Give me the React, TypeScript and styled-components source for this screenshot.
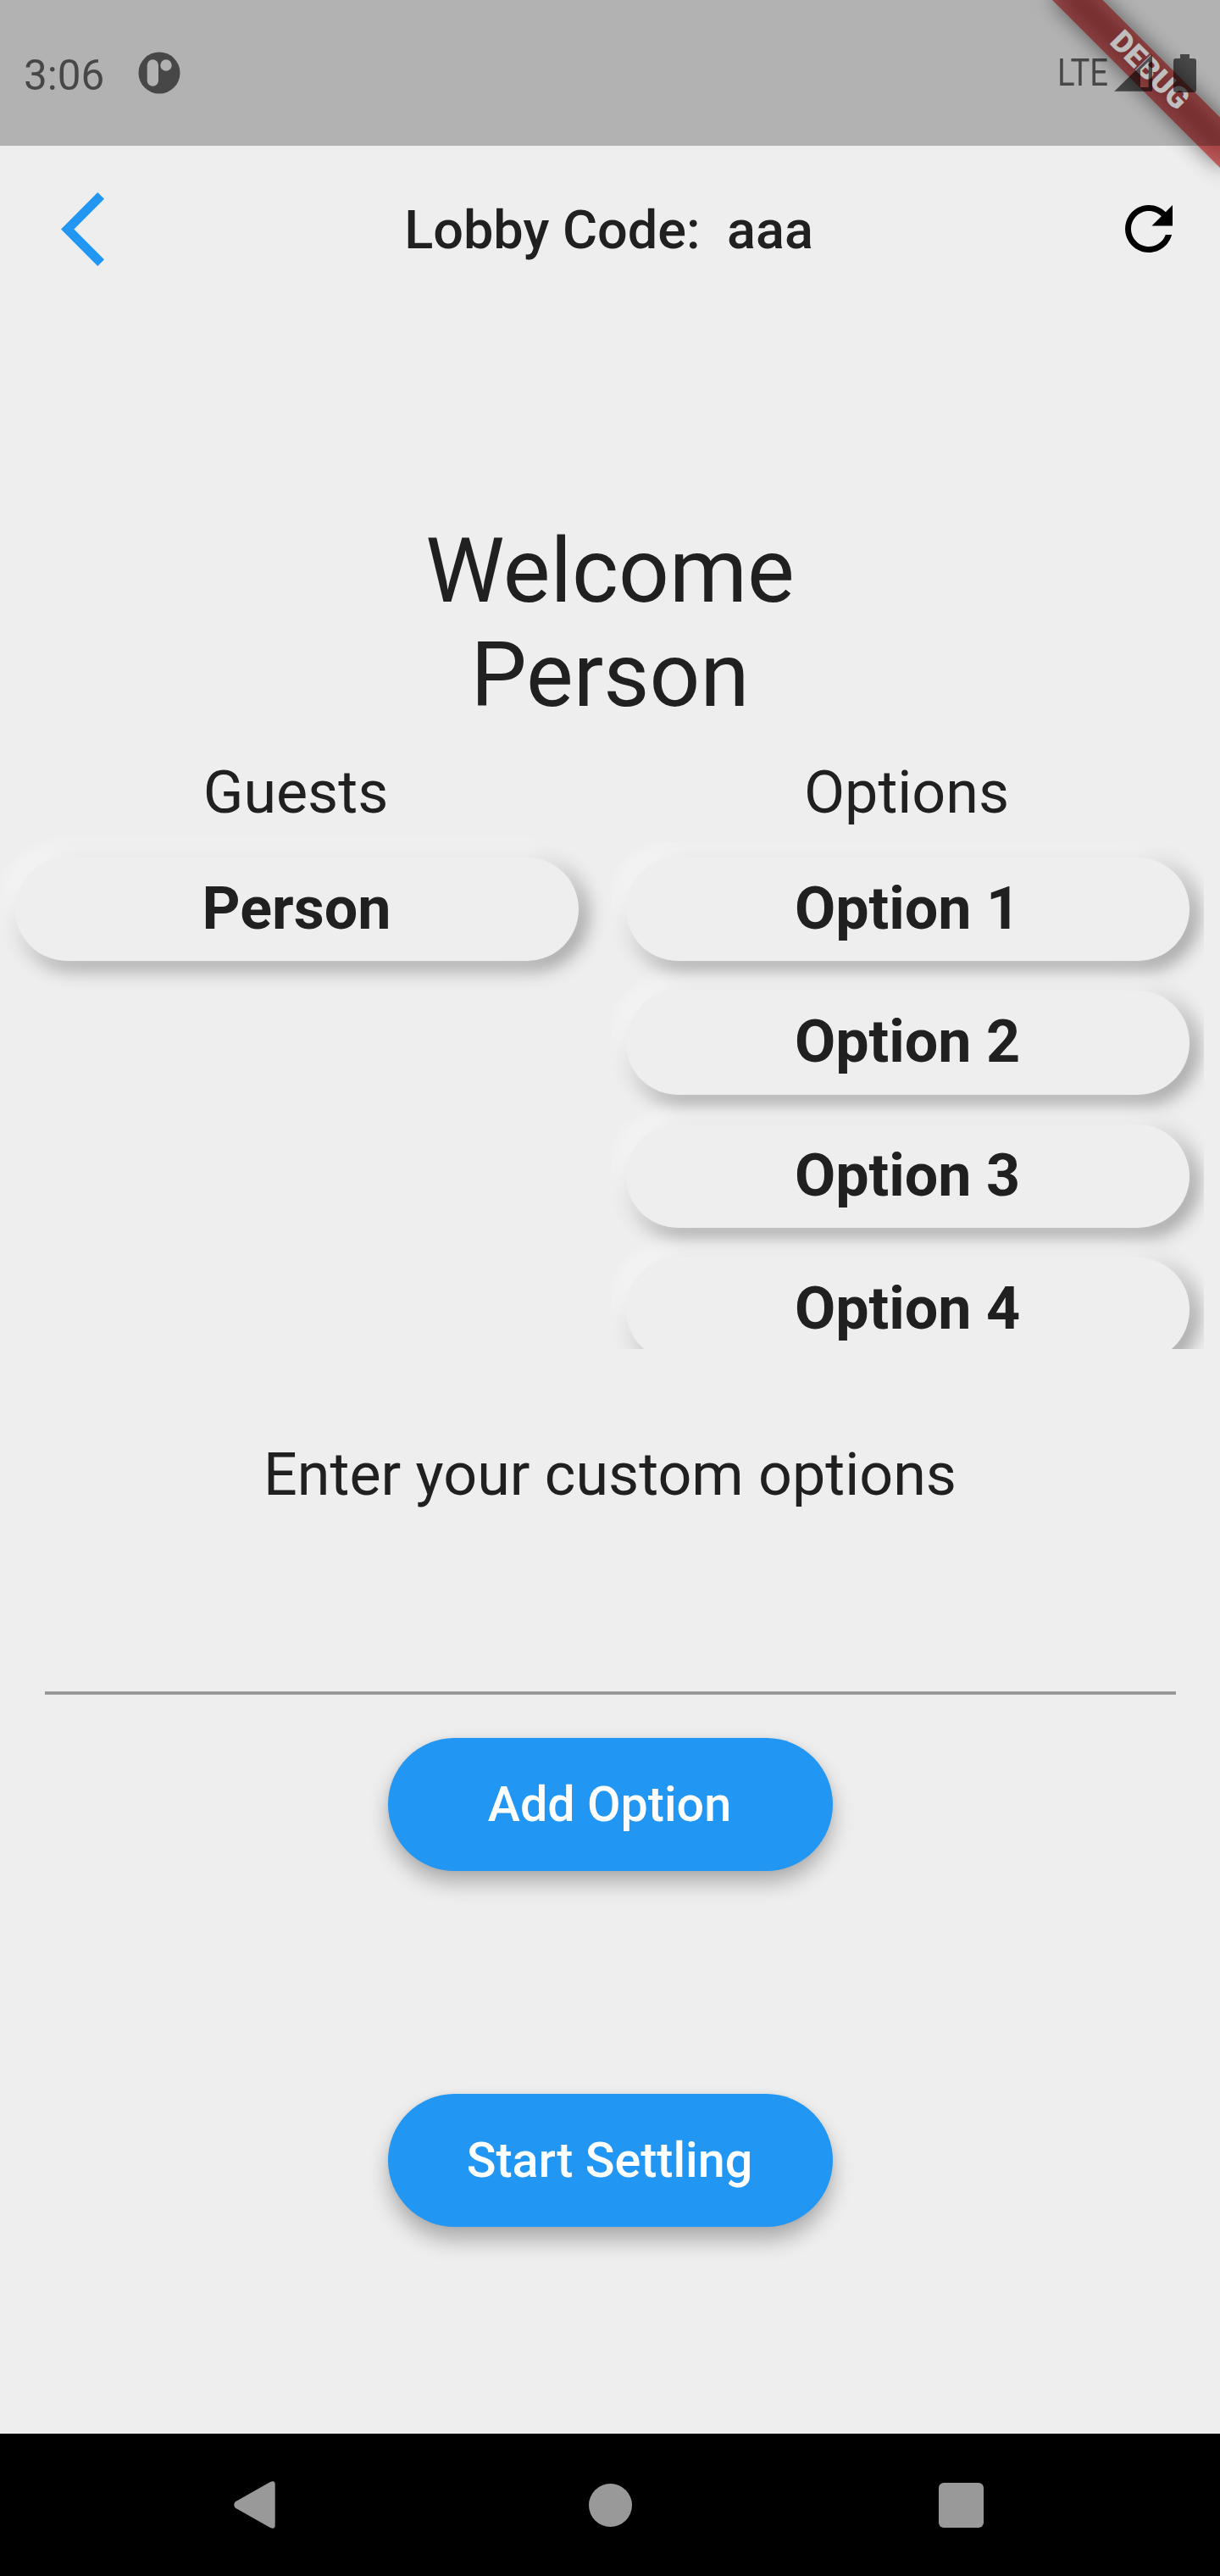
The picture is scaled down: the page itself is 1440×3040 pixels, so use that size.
import React from 'react';
import styled, { createGlobalStyle } from 'styled-components';

const Global = createGlobalStyle`
  html, body { margin: 0; padding: 0; background: #eeeeee; }
  *, *::before, *::after { box-sizing: border-box; }
`;

const Screen = styled.div`
  position: relative;
  display: flex;
  flex-direction: column;
  width: 1440px;
  height: 3040px;
  overflow: hidden;
  background: #eeeeee;
  color: #202020;
  font-family: Roboto, 'Liberation Sans', sans-serif;
`;

const StatusBar = styled.header`
  position: relative;
  z-index: 2;
  display: flex;
  flex: none;
  align-items: center;
  justify-content: space-between;
  height: 172px;
  padding: 0 28px;
  background: rgba(0, 0, 0, 0.25);
`;

const StatusGroup = styled.div`
  display: flex;
  align-items: center;
`;

const Clock = styled.span`
  width: 134.5px;
  padding-top: 5px;
  font-size: 49.4px;
  line-height: 58px;
  color: rgba(0, 0, 0, 0.6);
`;

const Network = styled.span`
  width: 67px;
  padding-top: 2px;
  font-size: 43.5px;
  line-height: 52px;
  color: rgba(0, 0, 0, 0.6);
  transform: scaleX(0.88);
  transform-origin: left center;
`;

const StatusIcon = styled.svg`
  display: block;
  flex: none;
`;

const BatterySlot = styled.div`
  margin-left: 24px;
`;

const BannerAnchor = styled.div`
  position: absolute;
  z-index: 1;
  top: 0;
  right: 0;
  width: 0;
  height: 0;
  transform: rotate(45deg);
`;

const BannerShadow = styled.div`
  position: absolute;
  left: -140px;
  top: 98px;
  width: 280px;
  height: 42px;
  background: rgba(0, 0, 0, 0.5);
  filter: blur(12.6px);
`;

const Banner = styled.div`
  position: absolute;
  left: -140px;
  top: 98px;
  width: 280px;
  height: 42px;
  background: rgba(183, 28, 28, 0.627);
  color: #ffffff;
  font-size: 35.7px;
  font-weight: 900;
  line-height: 39px;
  text-align: center;
`;

const AppBar = styled.nav`
  display: grid;
  flex: none;
  grid-template-columns: 196px 1fr 196px;
  align-items: center;
  height: 196px;
`;

const IconButton = styled.button<{ $side: 'left' | 'right' }>`
  display: flex;
  justify-content: ${(p) => (p.$side === 'left' ? 'flex-start' : 'flex-end')};
  padding: ${(p) => (p.$side === 'left' ? '0 0 0 72px' : '0 42px 0 0')};
  border: 0;
  background: none;
`;

const Title = styled.h1`
  margin: 0;
  padding: 4px 3px 0 0;
  font-size: 63px;
  font-weight: 500;
  line-height: 74px;
  text-align: center;
  white-space: pre;
`;

const Body = styled.main`
  display: flex;
  flex: 1;
  flex-direction: column;
  align-items: center;
  min-height: 0;
`;

const Welcome = styled.h2`
  margin: 244.5px 0 35px;
  font-size: 105px;
  font-weight: 400;
  line-height: 123px;
  text-align: center;
`;

const Lists = styled.section`
  display: grid;
  grid-template-columns: 700px 700px;
  gap: 21px;
  width: 100%;
`;

const Column = styled.div`
  display: flex;
  flex-direction: column;
  gap: 18.5px;
`;

const Label = styled.h3`
  margin: 0;
  font-size: 70px;
  font-weight: 400;
  line-height: 82px;
  text-align: center;
`;

const ColumnLabel = styled(Label)`
  padding-right: 2px;
`;

const List = styled.ul<{ $clipped?: boolean }>`
  display: flex;
  flex-direction: column;
  gap: 35px;
  height: 598px;
  margin: 0;
  padding: 17.5px;
  overflow: ${(p) => (p.$clipped ? 'hidden' : 'visible')};
  list-style: none;
`;

const Pill = styled.li`
  display: flex;
  flex: none;
  align-items: center;
  justify-content: center;
  height: 122.5px;
  padding-bottom: 2px;
  border-radius: 61.25px;
  background: #eeeeee;
  box-shadow:
    -7px -7px 21px 3.5px rgba(255, 255, 255, 0.7),
    7px 7px 21px 3.5px #9e9e9e;
  font-size: 70px;
  font-weight: 700;
  line-height: 82px;
`;

const EntryLabel = styled(Label)`
  margin-top: 106.5px;
`;

const Entry = styled.input`
  display: block;
  width: 1335px;
  height: 219.5px;
  padding: 0;
  border: 0;
  outline: 0;
  background: linear-gradient(#a8a8a8, #949494 1.5px, #949494 2.5px, #a8a8a8 4px) bottom / 100% 4px no-repeat;
  font: 400 56px Roboto, sans-serif;
`;

const Button = styled.button<{ $gap: number; $drop: number }>`
  display: flex;
  flex: none;
  align-items: center;
  justify-content: center;
  width: 525px;
  height: 157.5px;
  margin: ${(p) => p.$gap}px 0 0;
  padding: 1px 1px 0 0;
  border: 0;
  border-radius: 78.75px;
  background: #2196f3;
  box-shadow:
    0 ${(p) => p.$drop}px 24px rgba(0, 0, 0, 0.27),
    0 0 7px rgba(0, 0, 0, 0.06);
  color: #ffffff;
  font: 500 57.45px/68px Roboto, sans-serif;
`;

const NavBar = styled.footer`
  display: flex;
  flex: none;
  align-items: center;
  justify-content: space-between;
  height: 168px;
  padding: 0 279px 0 276px;
  background: #000000;
`;

const NavIcon = styled.svg<{ $shift?: number }>`
  display: block;
  margin-left: ${(p) => p.$shift ?? 0}px;
`;

const guests = ['Person'];
const options = ['Option 1', 'Option 2', 'Option 3', 'Option 4'];

const AppIcon = () => (
  <StatusIcon width="50" height="50" viewBox="0 0 50 50">
    <path
      fill="#000"
      fillOpacity="0.6"
      fillRule="evenodd"
      d="M25 .5a24.5 24.5 0 1 1 0 49a24.5 24.5 0 0 1 0-49zM10.700 16v18a6.650 6.650 0 0 0 13.300 0v-18a6.650 6.650 0 0 0-13.300 0zM33 9.300a6.700 6.700 0 1 0 0 13.400a6.700 6.700 0 0 0 0-13.400z"
    />
  </StatusIcon>
);

const SignalIcon = () => (
  <StatusIcon width="46" height="44" viewBox="0 0 46 44">
    <path fill="#000" fillOpacity="0.6" fillRule="evenodd" d="M.3 43.700L45 0V43.700zM31 18V39H40.700V8.500z" />
  </StatusIcon>
);

const BatteryIcon = () => (
  <StatusIcon width="27" height="45" viewBox="0 0 27 45">
    <path fill="#000" fillOpacity="0.6" d="M8 0H19V5H24a3 3 0 0 1 3 3V42a3 3 0 0 1-3 3H3a3 3 0 0 1-3-3V8a3 3 0 0 1 3-3H8z" />
  </StatusIcon>
);

export default function App() {
  return (
    <Screen>
      <Global />
      <BannerAnchor>
        <BannerShadow />
        <Banner>DEBUG</Banner>
      </BannerAnchor>
      <StatusBar>
        <StatusGroup>
          <Clock>3:06</Clock>
          <AppIcon />
        </StatusGroup>
        <StatusGroup>
          <Network>LTE</Network>
          <SignalIcon />
          <BatterySlot>
            <BatteryIcon />
          </BatterySlot>
        </StatusGroup>
      </StatusBar>
      <AppBar>
        <IconButton $side="left" aria-label="Back">
          <svg width="51" height="87" viewBox="0 0 51 87">
            <path fill="#2196f3" d="M0 43.500L43.300 0L51 7.700L15.400 43.500L51 79.300L43.300 87z" />
          </svg>
        </IconButton>
        <Title>{'Lobby Code:  aaa'}</Title>
        <IconButton $side="right" aria-label="Refresh">
          <svg width="84" height="84" viewBox="0 0 24 24">
            <path d="M17.650 6.350C16.200 4.900 14.210 4 12 4c-4.420 0-7.990 3.580-7.990 8s3.570 8 7.990 8c3.730 0 6.840-2.550 7.730-6h-2.080c-.820 2.330-3.040 4-5.650 4-3.310 0-6-2.690-6-6s2.690-6 6-6c1.660 0 3.140.690 4.220 1.780L13 11h7V4l-2.350 2.350z" />
          </svg>
        </IconButton>
      </AppBar>
      <Body>
        <Welcome>
          Welcome
          <br />
          Person
        </Welcome>
        <Lists>
          <Column>
            <ColumnLabel>Guests</ColumnLabel>
            <List>
              {guests.map((name) => (
                <Pill key={name}>{name}</Pill>
              ))}
            </List>
          </Column>
          <Column>
            <ColumnLabel>Options</ColumnLabel>
            <List $clipped>
              {options.map((name) => (
                <Pill key={name}>{name}</Pill>
              ))}
            </List>
          </Column>
        </Lists>
        <EntryLabel>Enter your custom options</EntryLabel>
        <Entry aria-label="Custom option" />
        <Button $gap={50.5} $drop={14}>Add Option</Button>
        <Button $gap={262.5} $drop={16}>Start Settling</Button>
      </Body>
      <NavBar>
        <NavIcon width="49" height="56" viewBox="0 0 49 56">
          <path fill="#999" d="M1.500 24.500L43 1Q48.700-1.500 48.700 4V52Q48.700 57.500 43 55L1.500 31.500Q-1 28 1.500 24.500z" />
        </NavIcon>
        <NavIcon $shift={7} width="51" height="51" viewBox="0 0 51 51">
          <circle cx="25.500" cy="25.500" r="25.500" fill="#999" />
        </NavIcon>
        <NavIcon width="53" height="53" viewBox="0 0 53 53">
          <rect width="53" height="53" rx="6" fill="#999" />
        </NavIcon>
      </NavBar>
    </Screen>
  );
}
